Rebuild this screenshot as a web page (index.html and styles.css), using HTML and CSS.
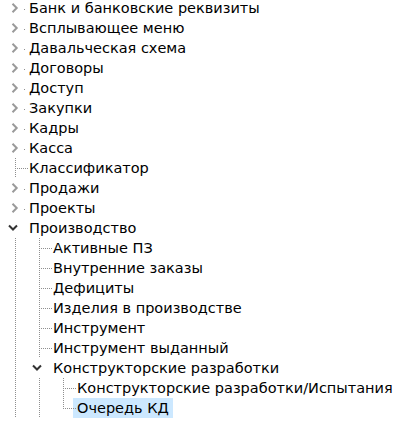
FILE: index.html
```html
<!DOCTYPE html>
<html lang="ru">
<head>
<meta charset="utf-8">
<title>Tree</title>
<link rel="stylesheet" href="styles.css">
</head>
<body>
<div class="tree">
  <div class="row"><span class="tog closed"><svg class="chev-r" viewBox="0 0 8 10"><path d="M1.5 0.8 L5.7 5 L1.5 9.2"/></svg></span><span class="lbl">Банк и банковские реквизиты</span></div>
  <div class="row"><span class="tog closed"><svg class="chev-r" viewBox="0 0 8 10"><path d="M1.5 0.8 L5.7 5 L1.5 9.2"/></svg></span><span class="lbl">Всплывающее меню</span></div>
  <div class="row"><span class="tog closed"><svg class="chev-r" viewBox="0 0 8 10"><path d="M1.5 0.8 L5.7 5 L1.5 9.2"/></svg></span><span class="lbl">Давальческая схема</span></div>
  <div class="row"><span class="tog closed"><svg class="chev-r" viewBox="0 0 8 10"><path d="M1.5 0.8 L5.7 5 L1.5 9.2"/></svg></span><span class="lbl">Договоры</span></div>
  <div class="row"><span class="tog closed"><svg class="chev-r" viewBox="0 0 8 10"><path d="M1.5 0.8 L5.7 5 L1.5 9.2"/></svg></span><span class="lbl">Доступ</span></div>
  <div class="row"><span class="tog closed"><svg class="chev-r" viewBox="0 0 8 10"><path d="M1.5 0.8 L5.7 5 L1.5 9.2"/></svg></span><span class="lbl">Закупки</span></div>
  <div class="row"><span class="tog closed"><svg class="chev-r" viewBox="0 0 8 10"><path d="M1.5 0.8 L5.7 5 L1.5 9.2"/></svg></span><span class="lbl">Кадры</span></div>
  <div class="row"><span class="tog closed"><svg class="chev-r" viewBox="0 0 8 10"><path d="M1.5 0.8 L5.7 5 L1.5 9.2"/></svg></span><span class="lbl">Касса</span></div>
  <div class="row"><span class="tog leaf"></span><span class="lbl lead">Классификатор</span></div>
  <div class="row"><span class="tog closed"><svg class="chev-r" viewBox="0 0 8 10"><path d="M1.5 0.8 L5.7 5 L1.5 9.2"/></svg></span><span class="lbl">Продажи</span></div>
  <div class="row"><span class="tog closed"><svg class="chev-r" viewBox="0 0 8 10"><path d="M1.5 0.8 L5.7 5 L1.5 9.2"/></svg></span><span class="lbl">Проекты</span></div>
  <div class="row"><span class="tog open"><svg class="chev-d" viewBox="0 0 10 8"><path d="M1 1.5 L5 5.5 L9 1.5"/></svg></span><span class="lbl">Производство</span></div>
  <div class="row"><span class="g line"></span><span class="tog leaf"></span><span class="lbl lead">Активные ПЗ</span></div>
  <div class="row"><span class="g line"></span><span class="tog leaf"></span><span class="lbl lead">Внутренние заказы</span></div>
  <div class="row"><span class="g line"></span><span class="tog leaf"></span><span class="lbl lead">Дефициты</span></div>
  <div class="row"><span class="g line"></span><span class="tog leaf"></span><span class="lbl lead">Изделия в производстве</span></div>
  <div class="row"><span class="g line"></span><span class="tog leaf"></span><span class="lbl lead">Инструмент</span></div>
  <div class="row"><span class="g line"></span><span class="tog leaf"></span><span class="lbl lead">Инструмент выданный</span></div>
  <div class="row"><span class="g line"></span><span class="tog open"><svg class="chev-d" viewBox="0 0 10 8"><path d="M1 1.5 L5 5.5 L9 1.5"/></svg></span><span class="lbl">Конструкторские разработки</span></div>
  <div class="row"><span class="g line"></span><span class="g line"></span><span class="tog leaf"></span><span class="lbl lead">Конструкторские разработки/Испытания</span></div>
  <div class="row"><span class="g line"></span><span class="g line"></span><span class="tog leaf last"></span><span class="lbl lead selected">Очередь КД</span></div>
</div>
</body>
</html>
```

FILE: styles.css
```css
html, body {
  margin: 0;
  padding: 0;
  background: #ffffff;
}

body {
  font-family: "DejaVu Sans", "Liberation Sans", sans-serif;
  font-size: 14.5px;
  color: #000000;
  overflow: hidden;
}

.tree {
  margin-top: -2px;
  display: flex;
  flex-direction: column;
}

.row {
  display: flex;
  height: 20px;
  white-space: nowrap;
}

.g {
  flex: none;
  width: 24px;
  height: 20px;
}

.g.line {
  background-image: repeating-linear-gradient(to bottom, #8f8f8f 0 1px, transparent 1px 2px);
  background-size: 1px 100%;
  background-position: 15px 0;
  background-repeat: no-repeat;
}

.tog {
  flex: none;
  width: 25px;
  height: 20px;
  display: flex;
  align-items: center;
  background-repeat: no-repeat;
}

.tog.closed {
  background-image: linear-gradient(#8f8f8f, #8f8f8f);
  background-size: 1px 1px;
  background-position: 24px 11px;
}

.tog.leaf {
  background-image:
    repeating-linear-gradient(to bottom, #8f8f8f 0 1px, transparent 1px 2px),
    repeating-linear-gradient(to right, #8f8f8f 0 1px, transparent 1px 2px);
  background-size: 1px 100%, 9px 1px;
  background-position: 15px 0, 17px 10px;
}

.tog.leaf.last {
  background-size: 1px 11px, 9px 1px;
}

.chev-r {
  width: 8px;
  height: 10px;
  margin-left: 11px;
  fill: none;
  stroke: #9a9a9a;
  stroke-width: 2;
}

.chev-d {
  width: 10px;
  height: 8px;
  margin-left: 8px;
  fill: none;
  stroke: #333333;
  stroke-width: 2;
}

.lbl {
  flex: none;
  height: 20px;
  line-height: 19px;
  padding: 1px 4px 0 4px;
  box-sizing: border-box;
}

.lbl.lead {
  background-image: repeating-linear-gradient(to right, #8f8f8f 0 1px, transparent 1px 2px);
  background-size: 3px 1px;
  background-position: 0 10px;
  background-repeat: no-repeat;
}

.lbl.selected {
  background-color: #cce8ff;
}
```
